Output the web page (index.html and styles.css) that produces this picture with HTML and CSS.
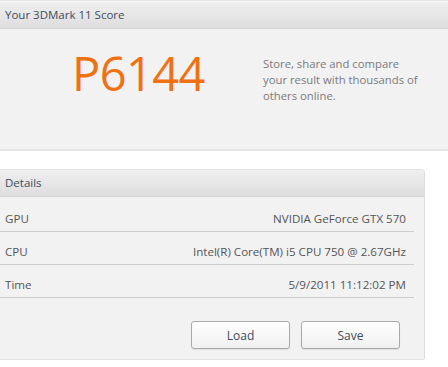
FILE: index.html
```html
<!DOCTYPE html>
<html lang="en">
  <head>
    <meta charset="UTF-8" />
    <meta name="viewport" content="width=device-width, initial-scale=1.0" />
    <title>3DMark 11 Score</title>
    <link rel="stylesheet" href="styles.css">
  </head>

  <body>
    <!-- Score panel -->
    <div class="score-panel">
      <div class="panel-head">Your 3DMark 11 Score</div>
      <div class="score-body">
        <div class="score">P6144</div>
        <p class="score-note">Store, share and compare your result with thousands of others online.</p>
      </div>
    </div>

    <!-- Details panel -->
    <div class="details-panel">
      <div class="panel-head">Details</div>
      <div class="detail-row">
        <span>GPU</span>
        <span>NVIDIA GeForce GTX 570</span>
      </div>
      <div class="detail-row">
        <span>CPU</span>
        <span>Intel(R) Core(TM) i5 CPU 750 @ 2.67GHz</span>
      </div>
      <div class="detail-row">
        <span>Time</span>
        <span>5/9/2011 11:12:02 PM</span>
      </div>
      <div class="actions">
        <button class="btn">Load</button>
        <button class="btn">Save</button>
      </div>
    </div>
  </body>
</html>
```

FILE: styles.css
```css
body {
  margin: 0;
  background-color: white;
  font-family: "Open Sans", "Noto Sans", sans-serif;
  font-size: 11px;
  color: #555;
}

.panel-head {
  height: 26px;
  line-height: 26px;
  padding-left: 5px;
  background: linear-gradient(#efefef, #dedede);
  border-bottom: 1px solid #d4d4d4;
  color: #3d4c5f;
  font-size: 11.5px;
}

.score-panel {
  border-top: 1px solid #e4e4e4;
  padding-top: 1px;
  background-color: #fafafa;
}

.score-body {
  display: flex;
  height: 120px;
  background-color: #f2f2f2;
  border-bottom: 2px solid #e4e4e4;
}

.score {
  width: 188px;
  padding: 14px 0 0 72px;
  font-size: 47px;
  letter-spacing: -0.6px;
  line-height: 60px;
  color: #f07114;
}

.score-note {
  width: 156px;
  margin: 0;
  padding: 27px 0 0 3px;
  font-size: 11.3px;
  line-height: 16px;
  color: #7a7a7a;
}

.details-panel {
  width: 424px;
  margin-top: 18px;
  background-color: #f2f2f2;
  border-right: 1px solid #dcdcdc;
  border-top: 1px solid #e2e2e2;
  border-bottom: 1px solid #e2e2e2;
  border-top-right-radius: 4px;
  border-bottom-right-radius: 2px;
}

.details-panel .panel-head {
  border-top-right-radius: 4px;
}

.detail-row {
  display: flex;
  justify-content: space-between;
  height: 32px;
  margin-right: 10px;
  padding: 0 8px 0 5px;
  font-size: 11.6px;
  line-height: 14px;
  align-items: flex-end;
  border-bottom: 1px solid #cfcfcf;
  color: #555;
}

.detail-row span {
  padding-bottom: 5px;
}

.detail-row:nth-child(2) {
  height: 34px;
}

.actions {
  display: flex;
  justify-content: flex-end;
  gap: 11px;
  padding: 23px 24px 10px 0;
}

.btn {
  width: 99px;
  height: 28px;
  background: linear-gradient(#ffffff, #f0f0f0);
  border: 1px solid #a9a9a9;
  border-radius: 3px;
  box-shadow: 0 1px 1px rgba(0, 0, 0, 0.08);
  font-family: "Open Sans", "Noto Sans", sans-serif;
  font-size: 12px;
  color: #3d4c5f;
}
```
